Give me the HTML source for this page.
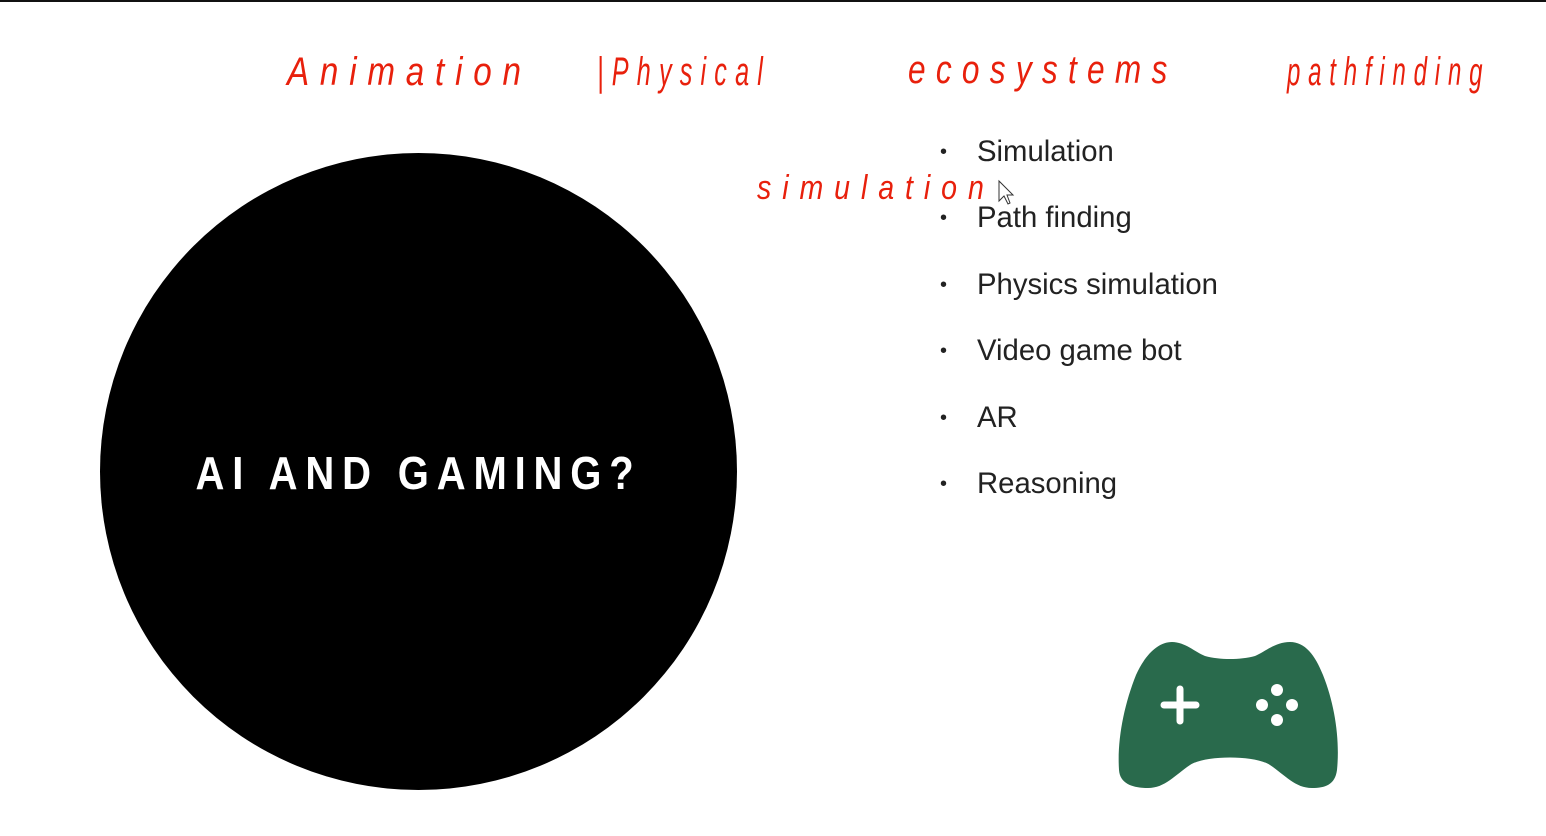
<!DOCTYPE html>
<html><head><meta charset="utf-8"><style>
html,body{margin:0;padding:0;background:#fff;width:1546px;height:836px;overflow:hidden;position:relative;font-family:"Liberation Sans",sans-serif}
.top{position:absolute;left:0;top:0;width:1546px;height:2px;background:#111}
.circle{position:absolute;left:100px;top:153px;width:637px;height:637px;border-radius:50%;background:#000}
.title{position:absolute;left:100px;top:448px;width:637px;text-align:center;color:#fff;font-weight:bold;font-size:46px;letter-spacing:9px;line-height:50px;transform:scaleX(0.87)}
.hw{position:absolute;color:#e8200c;font-family:"Liberation Sans",sans-serif;font-style:italic;font-size:40px;letter-spacing:13px;line-height:40px;white-space:nowrap;transform-origin:0 50%}
ul{position:absolute;left:940px;top:130px;margin:0;padding:0;list-style:none}
li{font-size:29.3px;color:#222;height:66.4px;line-height:44px;position:relative;padding-left:37px}
li:before{content:"•";position:absolute;left:0;font-size:20px;color:#222}
</style></head><body>
<div class="top"></div>
<div class="hw" style="left:287px;top:52px;transform:scaleX(0.83)">Animation</div>
<div class="hw" style="left:597px;top:52px;transform:scaleX(0.63)">|Physical</div>
<div class="hw" style="left:908px;top:50px;transform:scaleX(0.79)">ecosystems</div>
<div class="hw" style="left:1287px;top:52px;transform:scaleX(0.6)">pathfinding</div>
<div class="hw" style="left:757px;top:168px;font-size:34px;transform:scaleX(0.84)">simulation</div>
<div class="circle"></div>
<div class="title">AI AND GAMING?</div>
<ul>
<li>Simulation</li><li>Path finding</li><li>Physics simulation</li><li>Video game bot</li><li>AR</li><li>Reasoning</li>
</ul>
<svg style="position:absolute;left:0;top:0" width="1546" height="836">
<path fill="#296a4c" d="M1172,642 C1185,642 1195,652 1205,656 C1220,660 1240,660 1255,656 C1265,652 1275,642 1290,642 C1305,642 1315,655 1323,675 C1335,705 1340,740 1337,770 C1335,785 1325,788 1312,788 C1295,788 1285,775 1270,765 C1255,755 1205,755 1190,765 C1175,775 1165,788 1148,788 C1135,788 1120,785 1119,770 C1117,740 1124,705 1136,675 C1145,655 1158,642 1172,642 Z"/>
<path d="M1164,705 H1196 M1180,689 V721" stroke="#fff" stroke-width="7" stroke-linecap="round"/>
<circle cx="1277" cy="690" r="6" fill="#fff"/><circle cx="1262" cy="705" r="6" fill="#fff"/>
<circle cx="1292" cy="705" r="6" fill="#fff"/><circle cx="1277" cy="720" r="6" fill="#fff"/>
<path d="M999,181 L999,201 L1004,196 L1008,204 L1010,203 L1007,195 L1013,195 Z" fill="#fff" stroke="#333" stroke-width="1"/>
</svg>
</body></html>
